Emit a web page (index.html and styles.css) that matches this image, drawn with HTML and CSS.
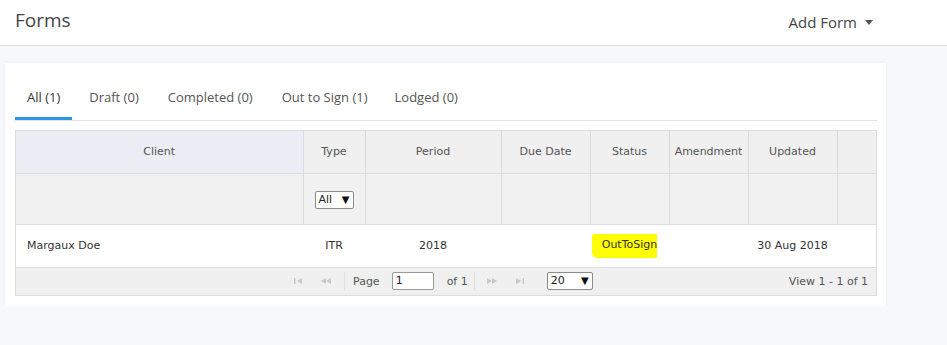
FILE: index.html
```html
<!DOCTYPE html>
<html lang="en">
<head>
    <meta charset="UTF-8">
    <title>Forms</title>
    <link rel="stylesheet" href="styles.css">
</head>
<body>
    <div class="topbar">
        <h1>Forms</h1>
        <div class="add-form">Add Form <span class="caret"></span></div>
    </div>

    <div class="card">
        <ul class="tabs">
            <li class="active">All (1)</li>
            <li>Draft (0)</li>
            <li>Completed (0)</li>
            <li>Out to Sign (1)</li>
            <li>Lodged (0)</li>
        </ul>

        <div class="grid">
            <table>
                <colgroup>
                    <col style="width: 287px">
                    <col style="width: 62px">
                    <col style="width: 136px">
                    <col style="width: 89px">
                    <col style="width: 79px">
                    <col style="width: 79px">
                    <col style="width: 89px">
                    <col style="width: 39px">
                </colgroup>
                <thead>
                    <tr class="head-row">
                        <th class="client-head">Client</th>
                        <th>Type</th>
                        <th>Period</th>
                        <th>Due Date</th>
                        <th>Status</th>
                        <th>Amendment</th>
                        <th>Updated</th>
                        <th></th>
                    </tr>
                    <tr class="filter-row">
                        <th></th>
                        <th><span class="mini-select">All <span class="arrow">&#9660;</span></span></th>
                        <th></th>
                        <th></th>
                        <th></th>
                        <th></th>
                        <th></th>
                        <th></th>
                    </tr>
                </thead>
                <tbody>
                    <tr class="data-row">
                        <td class="client">Margaux Doe</td>
                        <td>ITR</td>
                        <td>2018</td>
                        <td></td>
                        <td><span class="marker">OutToSign</span></td>
                        <td></td>
                        <td>30 Aug 2018</td>
                        <td></td>
                    </tr>
                </tbody>
            </table>

            <div class="pager">
                <div class="pager-center">
                    <span class="pg-btn">
                        <svg width="9" height="6" viewBox="0 0 9 6"><rect x="0" y="0" width="1.5" height="6" fill="#c8c8c8"/><path d="M8 0 L3 3 L8 6 Z" fill="#c8c8c8"/></svg>
                    </span>
                    <span class="pg-btn">
                        <svg width="10" height="6" viewBox="0 0 10 6"><path d="M5 0 L0 3 L5 6 Z M10 0 L5 3 L10 6 Z" fill="#c8c8c8"/></svg>
                    </span>
                    <span class="pg-sep"></span>
                    <span class="pg-text">Page</span>
                    <span class="pg-input">1</span>
                    <span class="pg-text">of 1</span>
                    <span class="pg-sep pg-sep-right"></span>
                    <span class="pg-btn">
                        <svg width="10" height="6" viewBox="0 0 10 6"><path d="M0 0 L5 3 L0 6 Z M5 0 L10 3 L5 6 Z" fill="#c8c8c8"/></svg>
                    </span>
                    <span class="pg-btn">
                        <svg width="9" height="6" viewBox="0 0 9 6"><path d="M1 0 L6 3 L1 6 Z" fill="#c8c8c8"/><rect x="7.5" y="0" width="1.5" height="6" fill="#c8c8c8"/></svg>
                    </span>
                    <span class="pg-size">20 <span class="arrow">&#9660;</span></span>
                </div>
                <div class="pager-info">View 1 - 1 of 1</div>
            </div>
        </div>
    </div>
</body>
</html>
```

FILE: styles.css
```css
* {
    box-sizing: border-box;
}
body {
    margin: 0;
    background-color: #f7f8fa;
    font-family: "Open Sans", sans-serif;
    color: #333;
}
.topbar {
    height: 46px;
    background-color: #fff;
    border-bottom: 1px solid #e0e0e0;
    display: flex;
    align-items: center;
    justify-content: space-between;
    padding: 0 72px 0 15px;
}
.topbar h1 {
    margin: 0 0 6px 0;
    font-size: 19px;
    font-weight: 400;
    color: #444;
}
.add-form {
    font-size: 15px;
    color: #444;
    display: flex;
    align-items: center;
    gap: 8px;
    margin-right: 2px;
    margin-bottom: 2px;
}
.caret {
    width: 0;
    height: 0;
    border-left: 4.5px solid transparent;
    border-right: 4.5px solid transparent;
    border-top: 5px solid #555;
    margin-top: 2px;
}
.card {
    background-color: #fff;
    margin: 17px 0 0 5px;
    width: 881px;
    padding: 20px 9px 10px 10px;
    box-shadow: 0 0 4px rgba(0, 0, 0, 0.06);
}
.tabs {
    list-style: none;
    margin: 0;
    padding: 0;
    display: flex;
    border-bottom: 1px solid #e3e3e3;
}
.tabs li {
    font-size: 13px;
    line-height: 18px;
    color: #555;
    padding: 5px 12px 11px;
    margin-right: 5px;
    border-bottom: 3px solid transparent;
}
.tabs li:nth-child(4) {
    margin-right: 3px;
}
.tabs li.active {
    color: #333;
    border-bottom-color: #2a95e0;
}
.grid {
    margin-top: 9px;
    border: 1px solid #dcdcdc;
    font-family: "DejaVu Sans", Verdana, sans-serif;
    font-size: 11px;
}
table {
    width: 100%;
    border-collapse: collapse;
    table-layout: fixed;
}
th, td {
    padding: 0;
}
th {
    font-weight: 400;
    color: #555;
    background-color: #f0f0f0;
    border-left: 1px solid #dcdcdc;
    border-bottom: 1px solid #dcdcdc;
    text-align: center;
}
th:first-child {
    border-left: none;
}
.head-row th {
    height: 42px;
}
.head-row .client-head {
    background-color: #ebecf4;
}
.filter-row th {
    height: 51px;
    background-color: #f1f1f1;
    padding-top: 2px;
}
.mini-select {
    display: inline-block;
    width: 39px;
    height: 18px;
    line-height: 16px;
    padding: 0 3px;
    text-align: left;
    color: #222;
    background: #fff;
    border: 1px solid #8a8a8a;
    border-radius: 2px;
}
.arrow {
    float: right;
    font-size: 10px;
    color: #111;
}
.data-row td {
    height: 43px;
    text-align: center;
    color: #333;
    background: #fff;
    border-bottom: 1px solid #dcdcdc;
}
.data-row td.client {
    text-align: left;
    padding-left: 11px;
}
.marker {
    display: inline-block;
    background-color: #ffff00;
    padding: 4px 0 7px 10px;
    margin-left: -10px;
    border-radius: 2px 0 1px 5px;
}
.pager {
    height: 27px;
    background-color: #f0f0f0;
    display: flex;
    align-items: center;
    color: #555;
}
.pager-center {
    display: flex;
    align-items: center;
    margin-left: 268px;
}
.pg-btn {
    width: 28px;
    display: flex;
    justify-content: center;
}
.pg-sep {
    width: 1px;
    height: 18px;
    background-color: #e0e0e0;
    margin: 0 8px 0 4px;
}
.pg-sep-right {
    margin: 0 3px 0 6px;
}
.pg-input {
    display: inline-block;
    width: 42px;
    height: 18px;
    line-height: 16px;
    padding: 0 3px;
    margin: 0 13px 0 12px;
    background: #fff;
    border: 1px solid #999;
    border-radius: 2px;
    color: #222;
}
.pg-size {
    display: inline-block;
    width: 46px;
    height: 18px;
    line-height: 16px;
    padding: 0 3px;
    margin-left: 13px;
    background: #fff;
    border: 1px solid #8a8a8a;
    border-radius: 2px;
    color: #222;
}
.pager-info {
    margin-left: auto;
    margin-right: 8px;
}
```
